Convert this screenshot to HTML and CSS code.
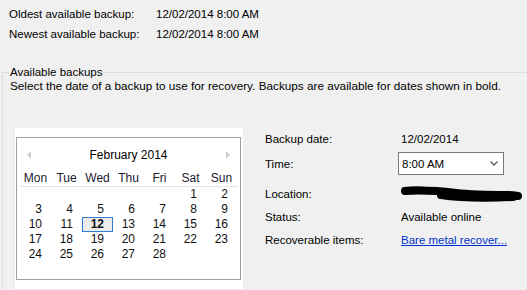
FILE: index.html
```html
<!DOCTYPE html>
<html>
<head>
<meta charset="utf-8">
<link rel="stylesheet" href="styles.css">
</head>
<body>
<div class="summary">
  <div class="sum-row"><span class="sum-label">Oldest available backup:</span><span>12/02/2014 8:00 AM</span></div>
  <div class="sum-row"><span class="sum-label">Newest available backup:</span><span>12/02/2014 8:00 AM</span></div>
</div>
<fieldset class="group">
  <legend class="group-title">Available backups</legend>
  <p class="desc">Select the date of a backup to use for recovery. Backups are available for dates shown in bold.</p>
  <div class="content">
    <div class="cal-panel">
      <div class="cal">
        <div class="cal-title">
          <svg class="nav" width="5" height="8" viewBox="0 0 5 8"><polygon points="4,0 0,4 4,8" fill="#cdcdcd"/></svg>
          <span>February 2014</span>
          <svg class="nav" width="5" height="8" viewBox="0 0 5 8"><polygon points="1,0 5,4 1,8" fill="#cdcdcd"/></svg>
        </div>
        <div class="cal-head">
          <span>Mon</span><span>Tue</span><span>Wed</span><span>Thu</span><span>Fri</span><span>Sat</span><span>Sun</span>
        </div>
        <div class="cal-days">
          <span></span><span></span><span></span><span></span><span></span><span>1</span><span>2</span>
          <span>3</span><span>4</span><span>5</span><span>6</span><span>7</span><span>8</span><span>9</span>
          <span>10</span><span>11</span><span class="sel">12</span><span>13</span><span>14</span><span>15</span><span>16</span>
          <span>17</span><span>18</span><span>19</span><span>20</span><span>21</span><span>22</span><span>23</span>
          <span>24</span><span>25</span><span>26</span><span>27</span><span>28</span><span></span><span></span>
        </div>
      </div>
    </div>
    <div class="details">
      <div class="row"><span class="label">Backup date:</span><span class="value">12/02/2014</span></div>
      <div class="row"><span class="label">Time:</span>
        <div class="combo"><span>8:00 AM</span>
          <svg width="8" height="5" viewBox="0 0 8 5"><path d="M0.5 0.5 L4 4 L7.5 0.5" fill="none" stroke="#5a5a5a" stroke-width="1.3"/></svg>
        </div>
      </div>
      <div class="row gap"><span class="label">Location:</span>
        <span class="value"><svg class="redact" width="122" height="16" viewBox="0 0 122 16"><path d="M4 5 C 20 4, 38 5, 55 7 C 72 9, 95 9, 108 9 C 113 9, 116 10, 117 10" fill="none" stroke="#000" stroke-width="8" stroke-linecap="round"/><path d="M40 9 C 60 12, 88 12, 112 11" fill="none" stroke="#000" stroke-width="8" stroke-linecap="round"/><path d="M4 4 C 12 3, 24 4, 34 5" fill="none" stroke="#000" stroke-width="6" stroke-linecap="round"/></svg></span>
      </div>
      <div class="row"><span class="label">Status:</span><span class="value">Available online</span></div>
      <div class="row"><span class="label">Recoverable items:</span><span class="value"><a class="link" href="#">Bare metal recover...</a></span></div>
    </div>
  </div>
</fieldset>
</body>
</html>
```
FILE: styles.css
```css
html, body {
  margin: 0;
  padding: 0;
}
body {
  width: 527px;
  height: 290px;
  overflow: hidden;
  background: #f0f0f0;
  font-family: "Liberation Sans", Arial, sans-serif;
  font-size: 11.5px;
  color: #000;
}
.summary {
  padding: 4px 0 0 9px;
}
.sum-row {
  display: flex;
  height: 20px;
  line-height: 20px;
}
.sum-label {
  width: 147px;
}
.group {
  margin: 20px 0 0 2px;
  padding: 0 0 0 7px;
  border: 1px solid #dcdcdc;
  border-right: 0;
  border-bottom: 0;
  min-width: 0;
}
.group-title {
  margin-left: -1px;
  padding: 0 1px;
  line-height: 16px;
}
.desc {
  margin: -1px 0 0 0;
  font-size: 11.75px;
  line-height: 14px;
  white-space: nowrap;
}
.content {
  display: flex;
  align-items: flex-start;
  margin-top: 35px;
}
.cal-panel {
  margin-left: 5px;
  width: 228px;
  height: 161px;
  box-sizing: border-box;
  background: #fff;
  padding: 9px 2px 9px 1px;
}
.cal {
  height: 143px;
  box-sizing: border-box;
  border: 1px solid #a0a0a0;
  padding: 9px 2px 0 2px;
  font-size: 12px;
}
.cal-title {
  display: flex;
  align-items: center;
  justify-content: space-between;
  height: 16px;
  line-height: 16px;
  padding: 0 8px 0 8px;
  color: #000;
}
.nav {
  display: block;
}
.cal-head {
  display: grid;
  grid-template-columns: repeat(7, 31px);
  margin-top: 7px;
  margin-left: 1px;
  height: 16px;
  line-height: 16px;
  border-bottom: 1px solid #e3e3e3;
  text-align: center;
  color: #1a1a2e;
}
.cal-days {
  display: grid;
  grid-template-columns: repeat(7, 31px);
  grid-auto-rows: 15px;
  margin-left: 1px;
}
.cal-days span {
  box-sizing: border-box;
  height: 15px;
  line-height: 13px;
  border: 1px solid transparent;
  text-align: right;
  padding-right: 8px;
  color: #111;
}
.cal-days .sel {
  border-color: #2c7bd6;
  background: #ececec;
  font-weight: bold;
}
.details {
  margin-left: 22px;
  padding-top: 1px;
  display: flex;
  flex-direction: column;
  gap: 3px;
}
.row {
  display: grid;
  grid-template-columns: 133px auto;
  align-items: center;
  min-height: 20px;
}
.row.gap {
  margin-top: 6px;
}
.label {
  line-height: 20px;
}
.value {
  padding-left: 3px;
  line-height: 20px;
  display: flex;
  align-items: center;
}
.redact {
  display: block;
}
.combo {
  width: 106px;
  height: 23px;
  box-sizing: border-box;
  border: 1px solid #7a7a7a;
  background: #fff;
  display: flex;
  align-items: center;
  justify-content: space-between;
  padding: 0 5px 0 3px;
}
.combo svg {
  display: block;
}
.link {
  color: #0033cc;
  text-decoration: underline;
}
```
